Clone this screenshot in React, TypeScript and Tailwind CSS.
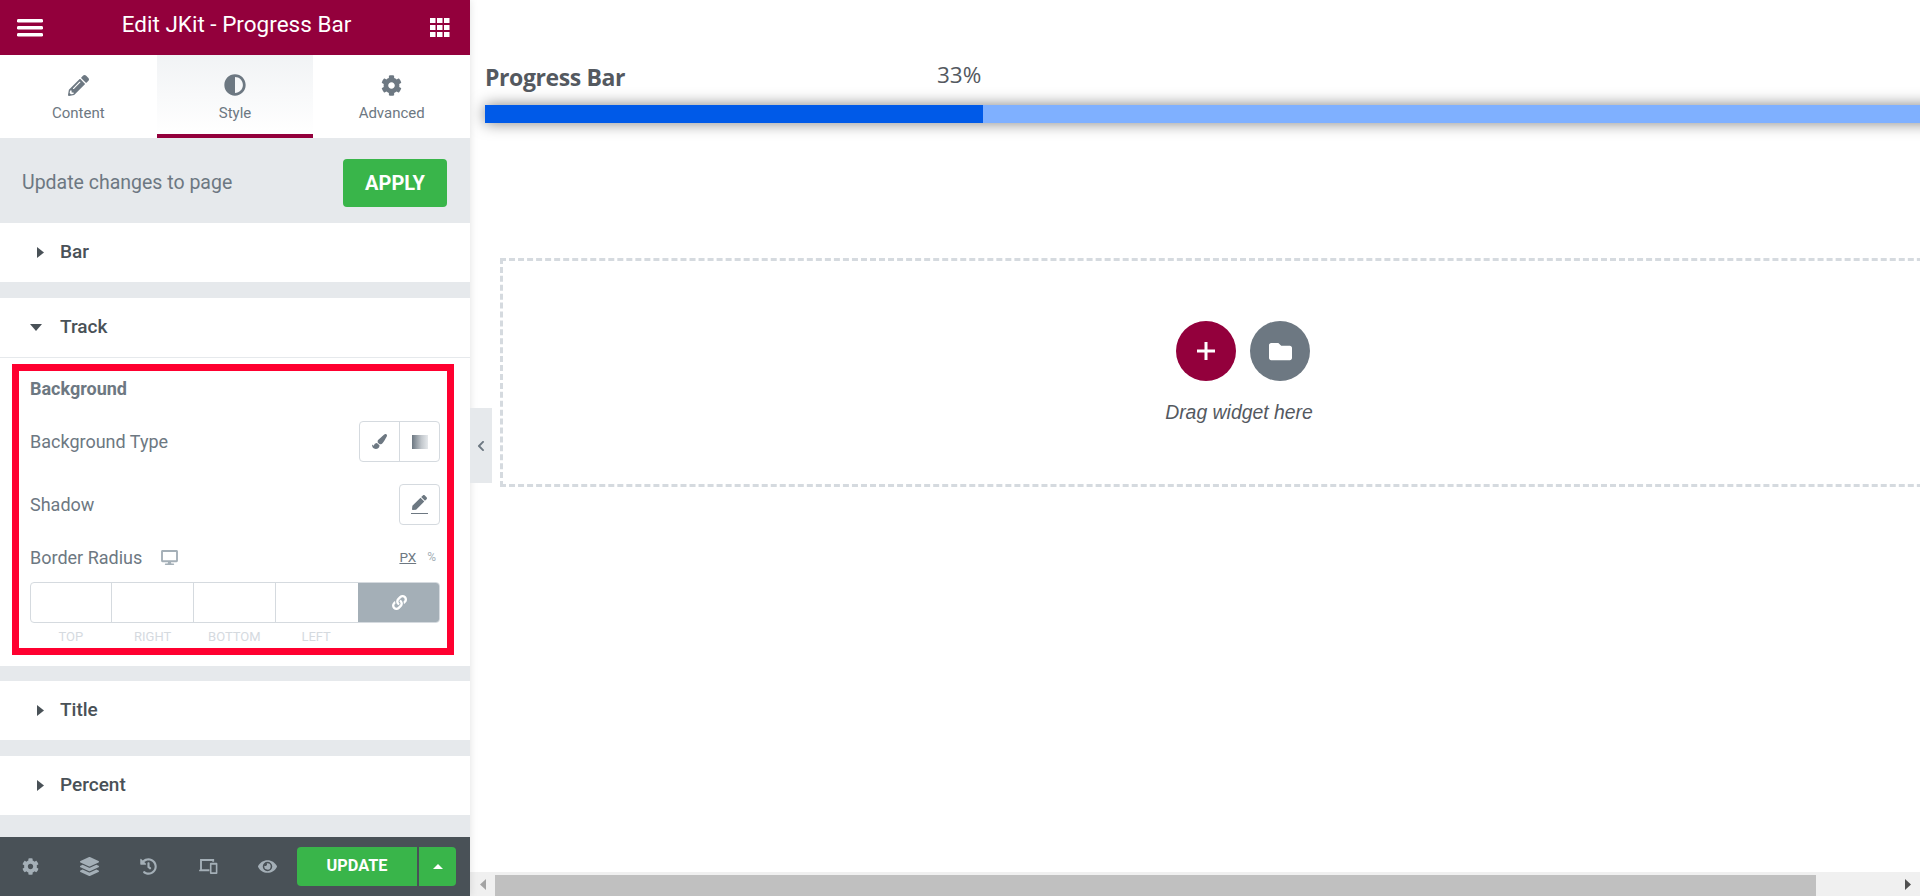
import { FaAdjust, FaChevronLeft, FaCog, FaDesktop, FaEye, FaFolder, FaHistory, FaLayerGroup, FaLink, FaPaintBrush, FaPen, FaPencilAlt } from "react-icons/fa";

const radiusFields = ["TOP", "RIGHT", "BOTTOM", "LEFT"];

function Section({ label }: { label: string }) {
  return (
    <div className="h-[59px] bg-white flex items-center pl-[37px] text-[#495157] mb-4">
      <svg viewBox="0 0 7 11" className="w-[7px] h-[11px]" fill="#495157">
        <path d="M0 0l7 5.5L0 11z" />
      </svg>
      <span className="ml-[16px] text-[19px] font-medium">{label}</span>
    </div>
  );
}

function Tab({ label, active, children }: { label: string; active?: boolean; children: React.ReactNode }) {
  return (
    <div
      className={
        active
          ? "flex-1 h-full flex flex-col items-center pt-[18px] border-b-4 border-[#93003c] bg-gradient-to-b from-[#f1f3f5] to-white"
          : "flex-1 h-full flex flex-col items-center pt-[18px]"
      }
    >
      <div className="h-[24px] flex items-center text-[#6d7882]">{children}</div>
      <span className="mt-[7px] text-[15px] leading-[18px] text-[#6d7882]">{label}</span>
    </div>
  );
}

function GridIcon() {
  return (
    <svg viewBox="0 0 20 19" className="w-[20px] h-[19px]" fill="white">
      {[0, 7, 14].map((y) =>
        [0, 7, 14].map((x) => <rect key={`${x}-${y}`} x={x} y={y} width="5.5" height="5" />),
      )}
    </svg>
  );
}

function GradientIcon() {
  return (
    <svg viewBox="0 0 16 14" className="w-[16px] h-[14px]">
      <defs>
        <linearGradient id="grad">
          <stop offset="0" stopColor="#6d7882" />
          <stop offset="0.6" stopColor="#c3c8cd" />
          <stop offset="1" stopColor="#e6e9ec" />
        </linearGradient>
      </defs>
      <rect width="16" height="14" fill="url(#grad)" />
    </svg>
  );
}

function ResponsiveIcon() {
  return (
    <svg viewBox="0 0 20 16" className="w-[19px] h-[15px]" fill="#a4afb7">
      <path d="M1 0h15v3h-2V2H3v9h8v2H0v-1.5h1z" />
      <path d="M12.5 4h6a1 1 0 0 1 1 1v10a1 1 0 0 1-1 1h-6a1 1 0 0 1-1-1V5a1 1 0 0 1 1-1zm.7 2v8h4.6V6z" />
    </svg>
  );
}

export default function App() {
  return (
    <div className="w-[1920px] h-[896px] flex overflow-hidden bg-white font-['Roboto',sans-serif]">
      {/* Sidebar */}
      <aside className="w-[470px] shrink-0 h-full flex flex-col bg-[#e6e9ec] relative z-10 shadow-[0_0_8px_rgba(0,0,0,0.12)]">
        <div className="h-[55px] shrink-0 bg-[#93003c] flex items-center justify-between pl-[17px] pr-5 text-white">
          <svg viewBox="0 0 26 18" className="w-[26px] h-[18px]" fill="white">
            <rect y="0" width="26" height="3.6" rx="1.4" />
            <rect y="7" width="26" height="3.6" rx="1.4" />
            <rect y="14" width="26" height="3.6" rx="1.4" />
          </svg>
          <span className="text-[22.5px] leading-none -mt-[6px]">Edit JKit - Progress Bar</span>
          <GridIcon />
        </div>

        <div className="h-[83px] shrink-0 bg-white flex">
          <Tab label="Content">
            <FaPencilAlt className="w-[21px] h-[21px]" />
          </Tab>
          <Tab label="Style" active>
            <FaAdjust className="w-[22px] h-[22px]" />
          </Tab>
          <Tab label="Advanced">
            <FaCog className="w-[21px] h-[21px]" />
          </Tab>
        </div>

        <div className="h-[85px] shrink-0 flex items-center justify-between pt-[5px] pl-[22px] pr-[23px] bg-[#e6e9ec]">
          <span className="text-[19.5px] text-[#6d7882]">Update changes to page</span>
          <div className="w-[104px] h-[48px] rounded-[4px] bg-[#39b54a] flex items-center justify-center text-white text-[20px] font-bold">
            APPLY
          </div>
        </div>

        <Section label="Bar" />

        <div className="bg-white h-[368px] mb-[15px] shrink-0">
          <div className="h-[60px] flex items-center pl-[30px] text-[#495157] border-b border-[#e6e9ec]">
            <svg viewBox="0 0 12 7" className="w-[12px] h-[7px]" fill="#495157">
              <path d="M0 0h12L6 7z" />
            </svg>
            <span className="ml-[18px] text-[19px] font-medium">Track</span>
          </div>
          <div className="ml-3 mr-4 mt-[6px] h-[291px] border-[7px] border-[#ff0030] pl-[11px] pr-[7px] text-[#6d7882]">
            <div className="mt-[8px] h-[20px] text-[18px] font-bold leading-5">Background</div>
            <div className="mt-[22px] flex items-center justify-between h-[41px]">
              <span className="text-[18px]">Background Type</span>
              <div className="w-[81px] h-[41px] flex border border-[#d5dadf] rounded-[4px]">
                <div className="flex-1 flex items-center justify-center border-r border-[#d5dadf]">
                  <FaPaintBrush className="w-[15px] h-[15px]" />
                </div>
                <div className="flex-1 flex items-center justify-center">
                  <GradientIcon />
                </div>
              </div>
            </div>
            <div className="mt-[22px] flex items-center justify-between h-[41px]">
              <span className="text-[18px]">Shadow</span>
              <div className="w-[41px] h-[41px] border border-[#d5dadf] rounded-[4px] flex flex-col items-center justify-center">
                <FaPen className="w-[15px] h-[15px]" />
                <div className="w-[17px] h-px mt-[3px] bg-[#6d7882]" />
              </div>
            </div>
            <div className="mt-[22px] flex items-center justify-between h-[20px]">
              <div className="flex items-center">
                <span className="text-[18px]">Border Radius</span>
                <FaDesktop className="ml-[19px] w-[17px] h-[15px] text-[#a4afb7]" />
              </div>
              <div className="flex items-center text-[13.5px] mr-[4px]">
                <span className="underline">PX</span>
                <span className="ml-[11px] text-[12px] text-[#a4afb7]">%</span>
              </div>
            </div>
            <div className="mt-[15px] h-[41px] flex rounded-[4px] overflow-hidden border border-[#d5dadf]">
              <div className="w-[81px] border-r border-[#d5dadf]" />
              <div className="w-[82px] border-r border-[#d5dadf]" />
              <div className="w-[82px] border-r border-[#d5dadf]" />
              <div className="w-[82px]" />
              <div className="flex-1 -my-px -mr-px bg-[#a4afb7] flex items-center justify-center text-white">
                <FaLink className="w-[15px] h-[15px]" />
              </div>
            </div>
            <div className="flex mt-[6px] w-[327px] text-[13px] leading-[16px] text-[#d5dadf]">
              {radiusFields.map((f) => (
                <span key={f} className="flex-1 text-center">
                  {f}
                </span>
              ))}
            </div>
          </div>
        </div>

        <Section label="Title" />
        <Section label="Percent" />
        <div className="flex-1" />

        <div className="absolute bottom-0 inset-x-0 h-[59px] bg-[#495157] flex items-center pl-[22px] text-[#a4afb7]">
          <FaCog className="w-[17px] h-[17px]" />
          <FaLayerGroup className="ml-[41px] w-[19px] h-[19px]" />
          <FaHistory className="ml-[41px] w-[17px] h-[17px]" />
          <div className="ml-[42px]">
            <ResponsiveIcon />
          </div>
          <FaEye className="ml-[40px] w-[19px] h-[19px]" />
          <div className="ml-[20px] flex h-[39px]">
            <div className="w-[120px] rounded-l-[4px] bg-[#39b54a] flex items-center justify-center text-white text-[16.3px] font-bold">
              UPDATE
            </div>
            <div className="ml-[2px] w-[37px] rounded-r-[4px] bg-[#39b54a] flex items-center justify-center">
              <svg viewBox="0 0 10 5" className="w-[10px] h-[5px]" fill="white">
                <path d="M0 5h10L5 0z" />
              </svg>
            </div>
          </div>
        </div>

        {/* Collapse tab */}
        <div className="absolute left-full top-[408px] w-[22px] h-[75px] bg-[#e6e9ec] flex items-center justify-center text-[#6d7882]">
          <FaChevronLeft className="w-[10px] h-[12px]" />
        </div>
      </aside>

      {/* Canvas */}
      <main className="flex-1 min-w-0 h-full flex flex-col">
        <div className="flex-1 min-h-0 overflow-hidden pl-[15px]">
          <div className="w-[1510px] pt-[60px]">
            <div className="relative h-[35px] text-[#54595f] font-['Open_Sans',sans-serif]">
              <span className="absolute left-0 top-[-1px] text-[23px] leading-[36px] font-bold tracking-[-0.4px]">Progress Bar</span>
              <span className="absolute left-[452px] top-[-3px] text-[22.5px] leading-[36px]">33%</span>
            </div>
            <div className="mt-[10px] h-[18px] bg-[#7fb0ff] shadow-[0_0_15px_rgba(0,0,0,0.5)]">
              <div className="w-[498px] h-full bg-[#005ae8]" />
            </div>
            <div className="ml-[15px] mt-[135px] w-[1486px] h-[229px] border-[3px] border-dashed border-[#d5dadf] flex flex-col items-center pt-[60px]">
              <div className="flex gap-[14px]">
                <div className="w-[60px] h-[60px] rounded-full bg-[#93003c] flex items-center justify-center">
                  <svg viewBox="0 0 18 18" className="w-[18px] h-[18px]" fill="white">
                    <path d="M7.5 0h3v7.5H18v3h-7.5V18h-3v-7.5H0v-3h7.5z" />
                  </svg>
                </div>
                <div className="w-[60px] h-[60px] rounded-full bg-[#6d7882] flex items-center justify-center text-white">
                  <FaFolder className="w-[23px] h-[23px]" />
                </div>
              </div>
              <span className="mt-[17px] mr-[8px] text-[19.4px] italic text-[#54595f] font-['Liberation_Sans',sans-serif]">
                Drag widget here
              </span>
            </div>
          </div>
        </div>
        <div className="h-[24px] shrink-0 bg-[#f0f0f0] flex items-center">
          <div className="w-[25px] flex justify-center">
            <svg viewBox="0 0 6 11" className="w-[6px] h-[11px]" fill="#a3a3a3">
              <path d="M6 0v11L0 5.5z" />
            </svg>
          </div>
          <div className="w-[1321px] h-[21px] mt-[2px] bg-[#c0c0c0]" />
          <div className="flex-1 flex justify-end pr-[9px]">
            <svg viewBox="0 0 6 11" className="w-[6px] h-[11px]" fill="#505050">
              <path d="M0 0v11l6-5.5z" />
            </svg>
          </div>
        </div>
      </main>
    </div>
  );
}
